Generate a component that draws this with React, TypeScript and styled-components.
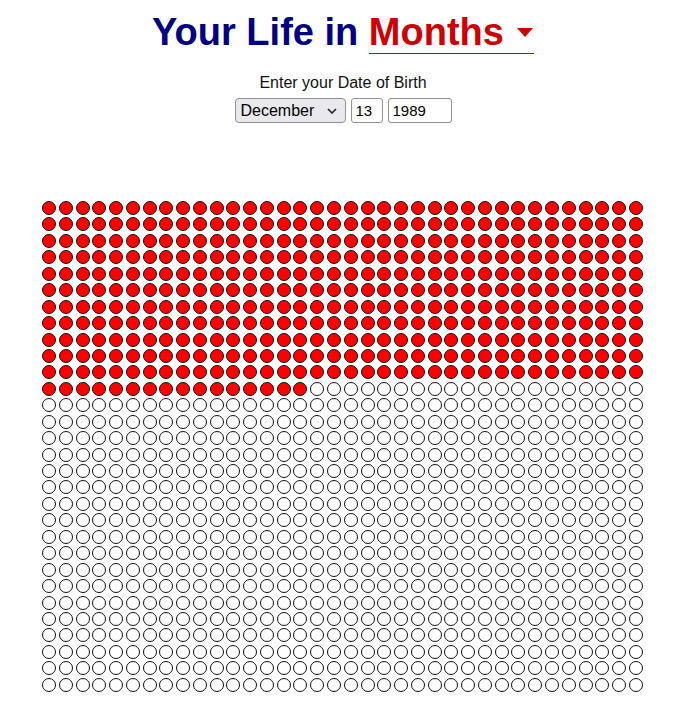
import React from "react";
import styled, { createGlobalStyle } from "styled-components";

const GlobalStyle = createGlobalStyle`
  html, body { margin: 0; padding: 0; background: #ffffff; }
  body { font-family: "Liberation Sans", Arial, sans-serif; color: #000; }
`;

const Page = styled.div`
  display: flex;
  flex-direction: column;
  align-items: center;
  padding-top: 11px;
  padding-left: 7px;
`;

const Title = styled.h1`
  margin: 0;
  display: flex;
  align-items: flex-start;
  font-size: 38px;
  line-height: 42px;
  font-weight: 700;
  color: #000080;
  white-space: pre;
`;

const UnitPicker = styled.span`
  display: inline-flex;
  align-items: flex-start;
  gap: 13px;
  color: #cc0000;
  border-bottom: 1px solid #cc0000;
  padding-right: 1px;
  cursor: pointer;
`;

const Caret = styled.svg`
  width: 16px;
  height: 9px;
  margin-top: 17px;
`;

const Prompt = styled.div`
  margin-top: 19px;
  font-size: 16px;
  line-height: 19px;
  color: #111;
`;

const DobRow = styled.div`
  margin-top: 6px;
  display: flex;
  gap: 5px;
  align-items: center;
`;

const chevron =
  "url(\"data:image/svg+xml,%3Csvg xmlns='http://www.w3.org/2000/svg' width='10' height='6' viewBox='0 0 10 6'%3E%3Cpath d='M1 1l4 4 4-4' fill='none' stroke='%23222' stroke-width='1.6'/%3E%3C/svg%3E\")";

const MonthSelect = styled.select`
  box-sizing: border-box;
  width: 111px;
  height: 25px;
  appearance: none;
  -webkit-appearance: none;
  font-family: "Liberation Sans", Arial, sans-serif;
  font-size: 16px;
  color: #000;
  background-color: #e9e9ed;
  background-image: ${chevron};
  background-repeat: no-repeat;
  background-position: right 8px center;
  border: 1px solid #8f8f9d;
  border-radius: 4px;
  padding: 0 4px 0 5px;
`;

const NumInput = styled.input<{ $w: number }>`
  box-sizing: border-box;
  width: ${(p) => p.$w}px;
  height: 25px;
  font-family: "Liberation Sans", Arial, sans-serif;
  font-size: 15px;
  color: #000;
  background: #fff;
  border: 1px solid #8f8f9d;
  border-radius: 3px;
  padding: 0 4px;
`;

const GridWrap = styled.div`
  align-self: stretch;
  margin-top: 78px;
  padding-left: 35px;
  padding-bottom: 20px;
`;

const Grid = styled.div`
  display: grid;
  grid-template-columns: repeat(36, 14px);
  column-gap: 2.77px;
  row-gap: 2.45px;
`;

const Dot = styled.span<{ $lived: boolean }>`
  box-sizing: border-box;
  width: 14px;
  height: 14px;
  border-radius: 50%;
  border: 1px solid #111;
  background: ${(p) => (p.$lived ? "#ff0000" : "#ffffff")};
`;

const MONTHS = [
  "January", "February", "March", "April", "May", "June",
  "July", "August", "September", "October", "November", "December",
];

const TOTAL = 36 * 30;
const LIVED = 412;

export default function App() {
  const dots = Array.from({ length: TOTAL }, (_, i) => i < LIVED);
  return (
    <>
      <GlobalStyle />
      <Page>
        <Title>
          {"Your Life in "}
          <UnitPicker>
            Months
            <Caret viewBox="0 0 16 9">
              <polygon points="0,0 16,0 8,9" fill="#cc0000" />
            </Caret>
          </UnitPicker>
        </Title>
        <Prompt>Enter your Date of Birth</Prompt>
        <DobRow>
          <MonthSelect defaultValue="December">
            {MONTHS.map((m) => (
              <option key={m} value={m}>{m}</option>
            ))}
          </MonthSelect>
          <NumInput $w={32} defaultValue="13" />
          <NumInput $w={64} defaultValue="1989" />
        </DobRow>
        <GridWrap>
          <Grid>
            {dots.map((lived, i) => (
              <Dot key={i} $lived={lived} />
            ))}
          </Grid>
        </GridWrap>
      </Page>
    </>
  );
}
